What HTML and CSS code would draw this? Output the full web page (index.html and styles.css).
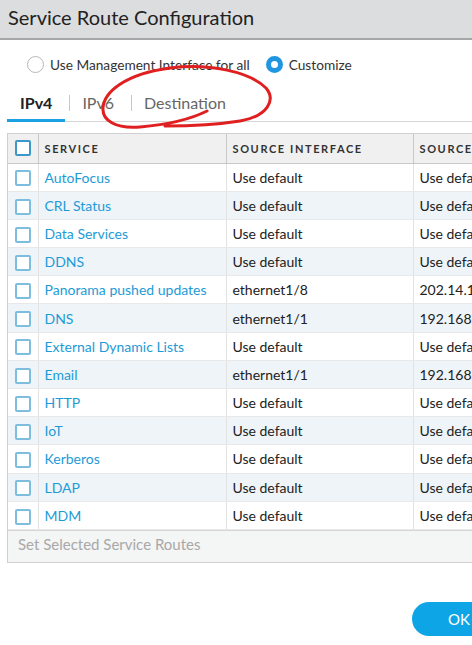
FILE: index.html
```html
<!DOCTYPE html>
<html>
<head>
<meta charset="utf-8">
<link rel="stylesheet" href="styles.css">
</head>
<body>
<div class="page">
  <div class="titlebar">Service Route Configuration</div>
  <div class="radios">
    <label class="radio"><span class="rb"></span>Use Management Interface for all</label>
    <label class="radio"><span class="rb on"></span>Customize</label>
  </div>
  <div class="tabs">
    <span class="tab active">IPv4</span>
    <span class="sep"></span>
    <span class="tab">IPv6</span>
    <span class="sep"></span>
    <span class="tab">Destination</span>
  </div>
  <div class="tablewrap">
    <table class="grid">
      <colgroup><col class="c0"><col class="c1"><col class="c2"><col class="c3"></colgroup>
      <thead>
        <tr><th><span class="cb head"></span></th><th>SERVICE</th><th>SOURCE INTERFACE</th><th>SOURCE ADDRESS</th></tr>
      </thead>
      <tbody>
        <tr><td><span class="cb"></span></td><td class="link">AutoFocus</td><td>Use default</td><td>Use default</td></tr>
        <tr><td><span class="cb"></span></td><td class="link">CRL Status</td><td>Use default</td><td>Use default</td></tr>
        <tr><td><span class="cb"></span></td><td class="link">Data Services</td><td>Use default</td><td>Use default</td></tr>
        <tr><td><span class="cb"></span></td><td class="link">DDNS</td><td>Use default</td><td>Use default</td></tr>
        <tr><td><span class="cb"></span></td><td class="link">Panorama pushed updates</td><td>ethernet1/8</td><td>202.14.1.1/24</td></tr>
        <tr><td><span class="cb"></span></td><td class="link">DNS</td><td>ethernet1/1</td><td>192.168.1.1/24</td></tr>
        <tr><td><span class="cb"></span></td><td class="link">External Dynamic Lists</td><td>Use default</td><td>Use default</td></tr>
        <tr><td><span class="cb"></span></td><td class="link">Email</td><td>ethernet1/1</td><td>192.168.1.1/24</td></tr>
        <tr><td><span class="cb"></span></td><td class="link">HTTP</td><td>Use default</td><td>Use default</td></tr>
        <tr><td><span class="cb"></span></td><td class="link">IoT</td><td>Use default</td><td>Use default</td></tr>
        <tr><td><span class="cb"></span></td><td class="link">Kerberos</td><td>Use default</td><td>Use default</td></tr>
        <tr><td><span class="cb"></span></td><td class="link">LDAP</td><td>Use default</td><td>Use default</td></tr>
        <tr><td><span class="cb"></span></td><td class="link">MDM</td><td>Use default</td><td>Use default</td></tr>
      </tbody>
    </table>
    <div class="footer">Set Selected Service Routes</div>
  </div>
  <div class="actions">
    <button class="ok">OK</button>
  </div>
  <svg class="annot" width="472" height="645" viewBox="0 0 472 645">
    <path d="M207 111 C195 117 175 124 140 127 C115 129 102 120 103 108 C104 92 125 74 170 68 C210 63 250 72 266 88 C276 100 268 116 240 121 C215 125 190 126 165 126" fill="none" stroke="#e02020" stroke-width="3" stroke-linecap="round"/>
  </svg>
</div>
</body>
</html>
```

FILE: styles.css
```css
* { box-sizing: border-box; }
html, body { margin: 0; padding: 0; }
body {
  width: 472px;
  height: 645px;
  overflow: hidden;
  background: #fff;
  font-family: Lato, "Open Sans", sans-serif;
  color: #333;
}
.page { position: relative; width: 472px; height: 645px; overflow: hidden; }
.titlebar {
  height: 40px;
  background: #dcdddf;
  border-bottom: 2px solid #a6a6a6;
  padding-left: 8px;
  font-size: 20px;
  line-height: 34px;
  color: #222;
}
.radios {
  display: flex;
  align-items: center;
  gap: 16px;
  padding: 9px 0 0 27px;
  height: 40px;
  font-size: 13.7px;
  color: #333;
}
.radio { display: flex; align-items: center; gap: 6px; }
.rb {
  width: 17px; height: 17px;
  border-radius: 50%;
  border: 1px solid #b8b8b8;
  background: #fff;
  display: inline-block;
}
.rb.on {
  border: 5px solid #2196e0;
  background: #fff;
}
.tabs {
  display: flex;
  align-items: center;
  height: 42px;
  margin-left: 7px;
  border-bottom: 1px solid #d6d6d6;
  font-size: 16px;
}
.tab {
  color: #666;
  height: 100%;
  display: flex;
  align-items: center;
  padding: 5px 13px 0;
  margin-bottom: -1px;
  border-bottom: 3px solid transparent;
}
.tab.active {
  color: #222;
  font-weight: bold;
  border-bottom-color: #1ba1e2;
}
.sep { width: 1px; height: 16px; background: #c8c8c8; margin: 4px -1px 0 4px; }
.tablewrap {
  margin: 11px 0 0 7px;
  width: 520px;
  border-left: 1px solid #d0d0d0;
  border-top: 1px solid #d0d0d0;
  border-bottom: 1px solid #d0d0d0;
}
.grid {
  border-collapse: collapse;
  table-layout: fixed;
  width: 520px;
  font-size: 14px;
}
.c0 { width: 30px; }
.c1 { width: 188px; }
.c2 { width: 187px; }
.c3 { width: 115px; }
.grid th {
  height: 29px;
  background: #f0f0f0;
  text-align: left;
  font-size: 11px;
  font-weight: bold;
  letter-spacing: 1.6px;
  color: #333;
  padding: 0 0 0 6px;
  border-right: 1px solid #c8c8c8;
  border-bottom: 1px solid #c8c8c8;
  white-space: nowrap;
  overflow: hidden;
}
.grid td {
  height: 28.2px;
  padding: 0 0 0 6px;
  border-right: 1px solid #e2e2e2;
  border-bottom: 1px solid #e8e8e8;
  white-space: nowrap;
  overflow: hidden;
  color: #222;
}
.grid th:first-child, .grid td:first-child { padding: 0; text-align: center; }
.grid tbody tr:nth-child(even) td { background: #eef4f7; }
.grid td.link { color: #1d9bd7; }
.cb {
  display: inline-block;
  vertical-align: middle;
  width: 16px; height: 16px;
  border: 2px solid #7dbddf;
  border-radius: 2px;
  background: #fff;
}
.cb.head { border-color: #3d97c9; }
.footer {
  height: 32px;
  background: #f4f5f5;
  border-top: 1px solid #d6d6d6;
  padding-left: 10px;
  font-size: 15px;
  line-height: 26px;
  color: #a8a8a8;
}
.actions {
  display: flex;
  justify-content: flex-end;
  padding-top: 39px;
}
.ok {
  width: 80px;
  height: 34px;
  margin-right: -20px;
  border: none;
  border-radius: 17px;
  background: #0ea5e6;
  color: #fff;
  font-family: Lato, sans-serif;
  font-size: 15px;
  text-align: left;
  padding-left: 36px;
}
.annot { position: absolute; left: 0; top: 0; pointer-events: none; }
```
